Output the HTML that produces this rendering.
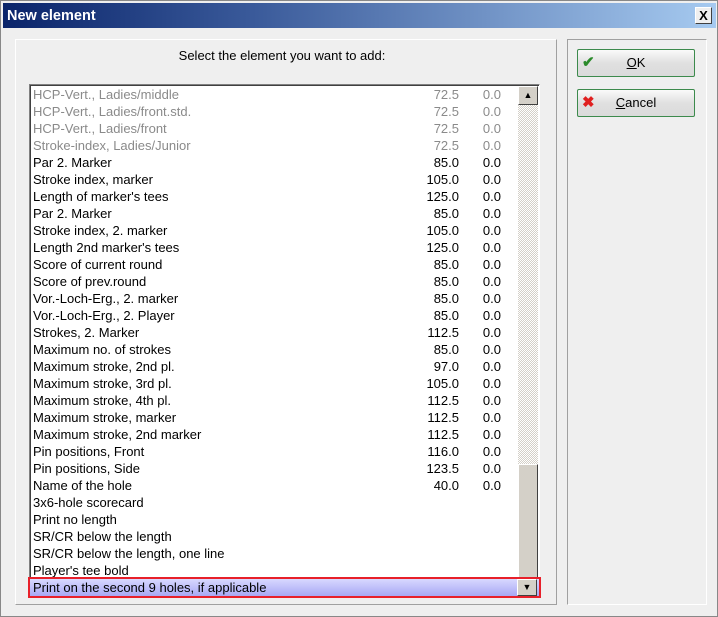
<!DOCTYPE html>
<html><head><style>
*{margin:0;padding:0;box-sizing:border-box}
body{width:718px;height:617px;font-family:"Liberation Sans",sans-serif;font-size:13px;position:relative;overflow:hidden;background:#efefef}
.win{position:absolute;left:0;top:0;width:718px;height:617px;border:1px solid #888;background:#efefef}
.title{position:absolute;left:2px;top:2px;width:713px;height:25px;background:linear-gradient(90deg,#0a246a,#3a5a9a 35%,#a6caf0);color:#fff;font-weight:bold;font-size:14.5px;line-height:26px;padding-left:4px}
.close{position:absolute;left:694px;top:6px;width:17px;height:17px;background:#efefef;border:1px solid;border-color:#fff #404040 #404040 #fff;color:#000;font-size:13px;font-weight:bold;text-align:center;line-height:15px}
.lp{position:absolute;left:14px;top:38px;width:542px;height:566px;border:1px solid;border-color:#fff #a0a0a0 #a0a0a0 #fff}
.rp{position:absolute;left:566px;top:38px;width:140px;height:566px;border:1px solid;border-color:#a0a0a0 #fff #fff #a0a0a0}
.hdr{position:absolute;left:0;top:47px;width:562px;text-align:center;font-size:13px}
.list{position:absolute;left:28px;top:83px;width:511px;height:514px;background:#fff;border:1px solid;border-color:#808080 #fff #fff #808080;box-shadow:inset 1px 1px 0 #404040}
.row{position:absolute;left:3px;margin-top:-1px;height:17px;line-height:17px;width:480px;white-space:nowrap}
.row .a{position:absolute;right:54px}
.row .b{position:absolute;right:12px}
.g{color:#8a8a8a}
.sb{position:absolute;left:517px;top:85px;width:20px;height:493px;background:repeating-conic-gradient(#d4d0c8 0 25%,#fff 0 50%) 0 0/2px 2px}
.btn3{position:absolute;width:20px;background:#d4d0c8;border:1px solid;border-color:#fff #404040 #404040 #fff}
.sel{position:absolute;left:27px;top:576px;width:513px;height:21px;border:2px solid #e8202a;background:linear-gradient(#d8d8ff,#a8a8f4);line-height:17px;padding-left:3px}
.b1{position:absolute;left:576px;width:118px;height:28px;border:1px solid #3c8a4c;border-radius:2px;background:linear-gradient(#fafafa,#e0e0e0 50%,#dadada);text-align:center;line-height:26px;font-size:13px}
</style></head><body>
<div class="win">
<div class="title">New element</div>
<div class="close">X</div>
<div class="lp"></div><div class="rp"></div>
<div class="hdr">Select the element you want to add:</div>
<div class="list">
<div class="row g" style="top:2px">HCP-Vert., Ladies/middle<span class="a">72.5</span><span class="b">0.0</span></div>
<div class="row g" style="top:19px">HCP-Vert., Ladies/front.std.<span class="a">72.5</span><span class="b">0.0</span></div>
<div class="row g" style="top:36px">HCP-Vert., Ladies/front<span class="a">72.5</span><span class="b">0.0</span></div>
<div class="row g" style="top:53px">Stroke-index, Ladies/Junior<span class="a">72.5</span><span class="b">0.0</span></div>
<div class="row" style="top:70px">Par 2. Marker<span class="a">85.0</span><span class="b">0.0</span></div>
<div class="row" style="top:87px">Stroke index, marker<span class="a">105.0</span><span class="b">0.0</span></div>
<div class="row" style="top:104px">Length of marker's tees<span class="a">125.0</span><span class="b">0.0</span></div>
<div class="row" style="top:121px">Par 2. Marker<span class="a">85.0</span><span class="b">0.0</span></div>
<div class="row" style="top:138px">Stroke index, 2. marker<span class="a">105.0</span><span class="b">0.0</span></div>
<div class="row" style="top:155px">Length 2nd marker's tees<span class="a">125.0</span><span class="b">0.0</span></div>
<div class="row" style="top:172px">Score of current round<span class="a">85.0</span><span class="b">0.0</span></div>
<div class="row" style="top:189px">Score of prev.round<span class="a">85.0</span><span class="b">0.0</span></div>
<div class="row" style="top:206px">Vor.-Loch-Erg., 2. marker<span class="a">85.0</span><span class="b">0.0</span></div>
<div class="row" style="top:223px">Vor.-Loch-Erg., 2. Player<span class="a">85.0</span><span class="b">0.0</span></div>
<div class="row" style="top:240px">Strokes, 2. Marker<span class="a">112.5</span><span class="b">0.0</span></div>
<div class="row" style="top:257px">Maximum no. of strokes<span class="a">85.0</span><span class="b">0.0</span></div>
<div class="row" style="top:274px">Maximum stroke, 2nd pl.<span class="a">97.0</span><span class="b">0.0</span></div>
<div class="row" style="top:291px">Maximum stroke, 3rd pl.<span class="a">105.0</span><span class="b">0.0</span></div>
<div class="row" style="top:308px">Maximum stroke, 4th pl.<span class="a">112.5</span><span class="b">0.0</span></div>
<div class="row" style="top:325px">Maximum stroke, marker<span class="a">112.5</span><span class="b">0.0</span></div>
<div class="row" style="top:342px">Maximum stroke, 2nd marker<span class="a">112.5</span><span class="b">0.0</span></div>
<div class="row" style="top:359px">Pin positions, Front<span class="a">116.0</span><span class="b">0.0</span></div>
<div class="row" style="top:376px">Pin positions, Side<span class="a">123.5</span><span class="b">0.0</span></div>
<div class="row" style="top:393px">Name of the hole<span class="a">40.0</span><span class="b">0.0</span></div>
<div class="row" style="top:410px">3x6-hole scorecard</div>
<div class="row" style="top:427px">Print no length</div>
<div class="row" style="top:444px">SR/CR below the length</div>
<div class="row" style="top:461px">SR/CR below the length, one line</div>
<div class="row" style="top:478px">Player's tee bold</div>
</div>
<div class="sb"></div>
<div class="btn3" style="left:517px;top:85px;height:19px;text-align:center;font-size:9px;line-height:17px">▲</div>
<div class="btn3" style="left:517px;top:463px;height:114px"></div>
<div class="sel">Print on the second 9 holes, if applicable</div>
<div class="btn3" style="left:516px;top:578px;height:17px;text-align:center;font-size:9px;line-height:15px">▼</div>
<div class="b1" style="top:48px"><span style="position:absolute;left:4px;top:0;color:#2a8a2a;font-weight:bold;font-size:15px">✔</span><u>O</u>K</div>
<div class="b1" style="top:88px"><span style="position:absolute;left:4px;top:0;color:#e02020;font-weight:bold;font-size:15px">✖</span><u>C</u>ancel</div>
</div>
</body></html>
